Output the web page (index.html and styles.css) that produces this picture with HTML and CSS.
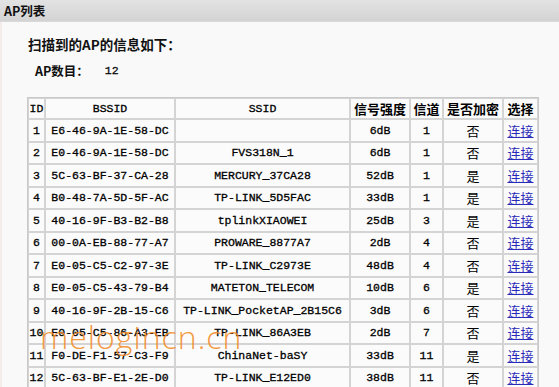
FILE: index.html
```html
<!DOCTYPE html>
<html lang="zh-CN">
<head>
<meta charset="utf-8">
<title>AP列表</title>
<link rel="stylesheet" href="styles.css">
</head>
<body>
<div class="titlebar">AP列表</div>
<div class="content">
  <div class="heading">扫描到的AP的信息如下：</div>
  <div class="count"><span class="label">AP数目：</span><span class="num">12</span></div>
  <table class="aplist">
    <colgroup>
      <col class="c-id"><col class="c-bssid"><col class="c-ssid"><col class="c-sig"><col class="c-ch"><col class="c-enc"><col class="c-sel">
    </colgroup>
    <thead>
      <tr class="head">
        <td>ID</td><td>BSSID</td><td>SSID</td><td class="cn">信号强度</td><td class="cn">信道</td><td class="cn">是否加密</td><td class="cn">选择</td>
      </tr>
    </thead>
    <tbody>
      <tr><td>1</td><td>E6-46-9A-1E-58-DC</td><td></td><td>6dB</td><td>1</td><td class="cn">否</td><td class="cn"><a href="#">连接</a></td></tr>
      <tr><td>2</td><td>E0-46-9A-1E-58-DC</td><td>FVS318N_1</td><td>6dB</td><td>1</td><td class="cn">否</td><td class="cn"><a href="#">连接</a></td></tr>
      <tr><td>3</td><td>5C-63-BF-37-CA-28</td><td>MERCURY_37CA28</td><td>52dB</td><td>1</td><td class="cn">是</td><td class="cn"><a href="#">连接</a></td></tr>
      <tr><td>4</td><td>B0-48-7A-5D-5F-AC</td><td>TP-LINK_5D5FAC</td><td>33dB</td><td>1</td><td class="cn">是</td><td class="cn"><a href="#">连接</a></td></tr>
      <tr><td>5</td><td>40-16-9F-B3-B2-B8</td><td>tplinkXIAOWEI</td><td>25dB</td><td>3</td><td class="cn">是</td><td class="cn"><a href="#">连接</a></td></tr>
      <tr><td>6</td><td>00-0A-EB-88-77-A7</td><td>PROWARE_8877A7</td><td>2dB</td><td>4</td><td class="cn">否</td><td class="cn"><a href="#">连接</a></td></tr>
      <tr><td>7</td><td>E0-05-C5-C2-97-3E</td><td>TP-LINK_C2973E</td><td>48dB</td><td>4</td><td class="cn">否</td><td class="cn"><a href="#">连接</a></td></tr>
      <tr><td>8</td><td>E0-05-C5-43-79-B4</td><td>MATETON_TELECOM</td><td>10dB</td><td>6</td><td class="cn">是</td><td class="cn"><a href="#">连接</a></td></tr>
      <tr><td>9</td><td>40-16-9F-2B-15-C6</td><td>TP-LINK_PocketAP_2B15C6</td><td>3dB</td><td>6</td><td class="cn">否</td><td class="cn"><a href="#">连接</a></td></tr>
      <tr><td>10</td><td>E0-05-C5-86-A3-EB</td><td>TP-LINK_86A3EB</td><td>2dB</td><td>7</td><td class="cn">否</td><td class="cn"><a href="#">连接</a></td></tr>
      <tr><td>11</td><td>F0-DE-F1-57-C3-F9</td><td>ChinaNet-baSY</td><td>33dB</td><td>11</td><td class="cn">是</td><td class="cn"><a href="#">连接</a></td></tr>
      <tr><td>12</td><td>5C-63-BF-E1-2E-D0</td><td>TP-LINK_E12ED0</td><td>38dB</td><td>11</td><td class="cn">否</td><td class="cn"><a href="#">连接</a></td></tr>
    </tbody>
  </table>
  <div class="watermark">melogincn.cn</div>
</div>
</body>
</html>
```

FILE: styles.css
```css
html, body {
  margin: 0;
  padding: 0;
  background: #f9f9f9;
  width: 559px;
  height: 387px;
  overflow: hidden;
}

body {
  color: #111;
  font-family: "Noto Sans CJK SC", "Liberation Sans", sans-serif;
}

.titlebar {
  height: 22px;
  line-height: 21px;
  padding-left: 4px;
  font-size: 12.5px;
  font-weight: bold;
  background: linear-gradient(#e3e3e3, #d3d3d3);
  border-bottom: 1px solid #d9d9d9;
  box-sizing: border-box;
}

.content {
  position: relative;
  padding: 13px 0 0 25px;
  border-left: 2px solid #f3ecea;
  min-height: 400px;
}

.heading {
  padding-left: 1px;
  font-size: 13.5px;
  font-weight: bold;
  line-height: 18px;
}

.count {
  margin-top: 9px;
  padding-left: 8px;
  font-size: 12.5px;
  font-weight: bold;
  line-height: 18px;
  display: flex;
  align-items: center;
}

.count .num {
  margin-left: 16px;
  font-family: "Liberation Mono", monospace;
  font-size: 11.5px;
  font-weight: normal;
  -webkit-text-stroke: 0.3px #000;
}

.aplist {
  margin-top: 17px;
  width: 510px;
  table-layout: fixed;
  border-collapse: separate;
  border-spacing: 0;
  border: 1px solid #c9c9c9;
  font-family: "Liberation Mono", monospace;
  font-size: 11.5px;
  color: #000;
  -webkit-text-stroke: 0.3px #000;
}

.c-id { width: 17px; }
.c-bssid { width: 130px; }
.c-ssid { width: 175px; }
.c-sig { width: 60px; }
.c-ch { width: 33px; }
.c-enc { width: 60px; }
.c-sel { width: 35px; }

.aplist td {
  border: 1px solid #d4d4d4;
  background: #fbfbfb;
  padding: 0;
  text-align: center;
  white-space: nowrap;
  overflow: hidden;
}

.aplist tr { height: 22.5px; }
.aplist tr.head { height: 20px; }

.aplist td.cn {
  font-family: "Noto Sans CJK SC", sans-serif;
  font-size: 13px;
  font-weight: normal;
  -webkit-text-stroke: 0;
}

.aplist tr.head td.cn { font-weight: bold; }

.aplist a {
  color: #2a2ab8;
  text-decoration: underline;
  -webkit-text-stroke: 0;
}

.watermark {
  position: absolute;
  left: 38px;
  top: 299px;
  font-family: "Open Sans", "Liberation Sans", sans-serif;
  font-weight: 300;
  font-size: 32px;
  line-height: 32px;
  letter-spacing: 1px;
  color: rgba(242, 140, 40, 0.88);
  pointer-events: none;
}
```
